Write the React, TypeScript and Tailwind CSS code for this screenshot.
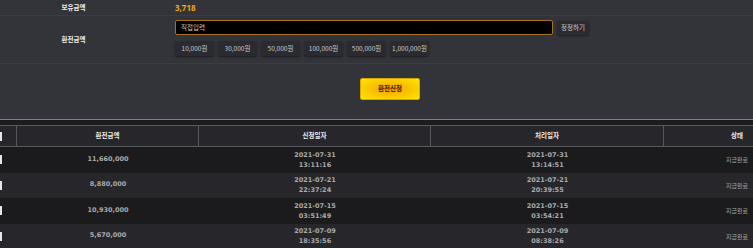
import React from "react";

const kr = { fontFamily: '"Noto Sans CJK KR", "Noto Sans", sans-serif' };
const mono = { fontFamily: '"DejaVu Sans", "Noto Sans CJK KR", sans-serif' };

const quickAmounts = ["10,000원", "30,000원", "50,000원", "100,000원", "500,000원", "1,000,000원"];

const history = [
  { amount: "11,660,000", reqDate: "2021-07-31", reqTime: "13:11:16", doneDate: "2021-07-31", doneTime: "13:14:51", status: "지급완료" },
  { amount: "8,880,000", reqDate: "2021-07-21", reqTime: "22:37:24", doneDate: "2021-07-21", doneTime: "20:39:55", status: "지급완료" },
  { amount: "10,930,000", reqDate: "2021-07-15", reqTime: "03:51:49", doneDate: "2021-07-15", doneTime: "03:54:21", status: "지급완료" },
  { amount: "5,670,000", reqDate: "2021-07-09", reqTime: "18:35:56", doneDate: "2021-07-09", doneTime: "08:38:26", status: "지급완료" },
];

const App = () => {
  return (
    <div className="w-[753px] h-[248px] overflow-hidden bg-[#333439]" style={kr}>
      {/* Form */}
      <div className="flex h-[16px] border-b border-[#3c3d42]">
        <div className="w-[147px] flex items-center justify-center text-[6.5px] font-bold text-[#ededed]">보유금액</div>
        <div className="pl-[28px] flex items-center text-[8px] font-bold text-[#f0a81c]" style={{ fontFamily: '"Noto Sans", sans-serif' }}>
          3,718
        </div>
      </div>
      <div className="flex h-[48px] border-b border-[#3c3d42]">
        <div className="w-[147px] flex items-center justify-center text-[6.5px] font-bold text-[#ededed]">환전금액</div>
        <div className="pl-[28px] pt-[4px] flex flex-col gap-[6px]">
          <div className="flex items-center gap-[4px]">
            <div className="w-[378px] h-[15px] bg-black border border-[#a8711c] rounded-[2px] flex items-center pl-[5px] text-[6.5px] text-[#c8c8c8]">
              직접입력
            </div>
            <div className="h-[14px] w-[32px] flex items-center justify-center rounded-[2px] bg-[#2a2b30] shadow-[0_1px_2px_rgba(0,0,0,0.45)] text-[6.5px] text-[#c9c9cc]">
              정정하기
            </div>
          </div>
          <div className="flex gap-[4px]">
            {quickAmounts.map((a) => (
              <div
                key={a}
                className="h-[15px] w-[39px] flex items-center justify-center rounded-[2px] bg-[#2a2b30] shadow-[0_1px_2px_rgba(0,0,0,0.45)] text-[6.5px] text-[#c9c9cc] whitespace-nowrap"
              >
                {a}
              </div>
            ))}
          </div>
        </div>
      </div>
      <div className="h-[55px] flex justify-center pl-[27px] pt-[14px]">
        <div
          className="w-[60px] h-[22px] rounded-[2px] border border-[#d4a800] flex items-center justify-center text-[6.5px] font-bold text-[#2a2200]"
          style={{ background: "radial-gradient(ellipse at center, #f5a00c 0%, #fbc800 55%, #ffe600 100%)" }}
        >
          환전신청
        </div>
      </div>

      {/* History */}
      <div className="border-t border-[#b5781f] bg-[#1c1c1f] pt-[5px]">
        <div className="w-[810px] border-t border-b border-[#58585c] bg-[#26262b] grid grid-cols-[17px_182px_232px_233px_146px] h-[22px] text-[6.5px] font-bold text-[#ececec]">
          <div className="flex items-center border-r border-[#58585c]">
            <div className="w-[2px] h-[9px] bg-[#e6e6e6]" />
          </div>
          <div className="flex items-center justify-center border-r border-[#58585c]">환전금액</div>
          <div className="flex items-center justify-center border-r border-[#58585c]">신청일자</div>
          <div className="flex items-center justify-center border-r border-[#58585c]">처리일자</div>
          <div className="flex items-center justify-center">상태</div>
        </div>
        {history.map((row, i) => (
          <div
            key={i}
            className={`w-[810px] grid grid-cols-[17px_182px_232px_233px_146px] h-[25.5px] ${
              i % 2 === 0 ? "bg-[#1b1b1d]" : "bg-[#27272b]"
            }`}
          >
            <div className="flex items-center">
              <div className="w-[2px] h-[9px] bg-[#e6e6e6]" />
            </div>
            <div className="flex items-center justify-center text-[6.5px] text-[#a9a9a9] font-bold" style={mono}>
              {row.amount}
            </div>
            <div className="flex flex-col items-center justify-center leading-[10px] text-[6.5px] text-[#a9a9a9] font-bold" style={mono}>
              <span>{row.reqDate}</span>
              <span>{row.reqTime}</span>
            </div>
            <div className="flex flex-col items-center justify-center leading-[10px] text-[6.5px] text-[#a9a9a9] font-bold" style={mono}>
              <span>{row.doneDate}</span>
              <span>{row.doneTime}</span>
            </div>
            <div className="flex items-center justify-center text-[6px] text-[#a0a0a0]">{row.status}</div>
          </div>
        ))}
      </div>
    </div>
  );
};

export default App;
